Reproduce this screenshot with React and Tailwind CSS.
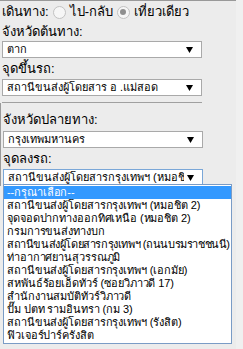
import React from 'react';

const options = [
  '--กรุณาเลือก--',
  'สถานีขนส่งผู้โดยสารกรุงเทพฯ (หมอชิต 2)',
  'จุดจอดปากทางออกทิศเหนือ (หมอชิต 2)',
  'กรมการขนส่งทางบก',
  'สถานีขนส่งผู้โดยสารกรุงเทพฯ (ถนนบรมราชชนนี)',
  'ท่าอากาศยานสุวรรณภูมิ',
  'สถานีขนส่งผู้โดยสารกรุงเทพฯ (เอกมัย)',
  'สหพันธ์ร้อยเอ็ดทัวร์ (ซอยวิภาวดี 17)',
  'สำนักงานสมบัติทัวร์วิภาวดี',
  'ปั๊ม ปตท รามอินทรา (กม 3)',
  'สถานีขนส่งผู้โดยสารกรุงเทพฯ (รังสิต)',
  'ฟิวเจอร์ปาร์ครังสิต',
];

function FakeSelect({ value, focused }) {
  return (
    <div
      className={
        'flex h-[17px] w-[200px] items-center justify-between border bg-white pl-[4px] pr-[8px] text-[11px] leading-[15px] ' +
        (focused ? 'border-[#7aa7d8]' : 'border-[#a9a9a9]')
      }
    >
      <span className="overflow-hidden whitespace-nowrap">{value}</span>
      <svg width="7" height="6" viewBox="0 0 7 6" className="ml-[3px] shrink-0">
        <path d="M0 0h7L3.5 6z" fill="#000" />
      </svg>
    </div>
  );
}

function Radio({ checked }) {
  return (
    <span className="inline-flex h-[13px] w-[13px] items-center justify-center rounded-full border border-[#c2c2c2] bg-[#f6f6f6]">
      {checked && <span className="h-[6px] w-[6px] rounded-full bg-[#8f8f8f]" />}
    </span>
  );
}

export default function App() {
  return (
    <div
      className="relative h-[349px] w-[243px] overflow-hidden bg-[#f0f0f0] text-[13px] text-black"
      style={{ fontFamily: 'Tahoma, "Liberation Sans", "Noto Sans", sans-serif' }}
    >
      <div className="h-full w-[236px] border-t border-[#999] bg-[#ececec] pl-[2px]">
        <div className="flex h-[22px] items-center gap-[4px]">
          <span>เดินทาง:</span>
          <Radio />
          <span>ไป-กลับ</span>
          <Radio checked />
          <span>เที่ยวเดียว</span>
        </div>
        <div className="flex h-[18px] items-center">จังหวัดต้นทาง:</div>
        <FakeSelect value="ตาก" />
        <div className="flex h-[21px] items-center">จุดขึ้นรถ:</div>
        <FakeSelect value="สถานีขนส่งผู้โดยสาร อ .แม่สอด" />
        <div className="mt-[6px] h-px w-[200px] bg-[#a0a0a0]" />
        <div className="-ml-[2px] border-l border-[#9a9a9a] pl-[2px]">
          <div className="flex h-[28px] items-end pb-[2px]">จังหวัดปลายทาง:</div>
          <FakeSelect value="กรุงเทพมหานคร" />
          <div className="flex h-[21px] items-center">จุดลงรถ:</div>
          <FakeSelect value="สถานีขนส่งผู้โดยสารกรุงเทพฯ (หมอชิต 2)" focused />
        </div>
      </div>

      <ul className="absolute left-[3px] top-[184px] w-[229px] overflow-hidden border border-[#7a9cc6] bg-white py-px text-[11px] leading-[13px] tracking-[-0.1px]">
        {options.map((o, i) => (
          <li
            key={o}
            className={
              'h-[13px] whitespace-nowrap pl-[3px] ' +
              (i === 0 ? 'bg-[#3399ff] text-white ' : '') +
              (i === 4 ? 'tracking-[-0.4px]' : '')
            }
          >
            {o}
          </li>
        ))}
      </ul>
    </div>
  );
}
